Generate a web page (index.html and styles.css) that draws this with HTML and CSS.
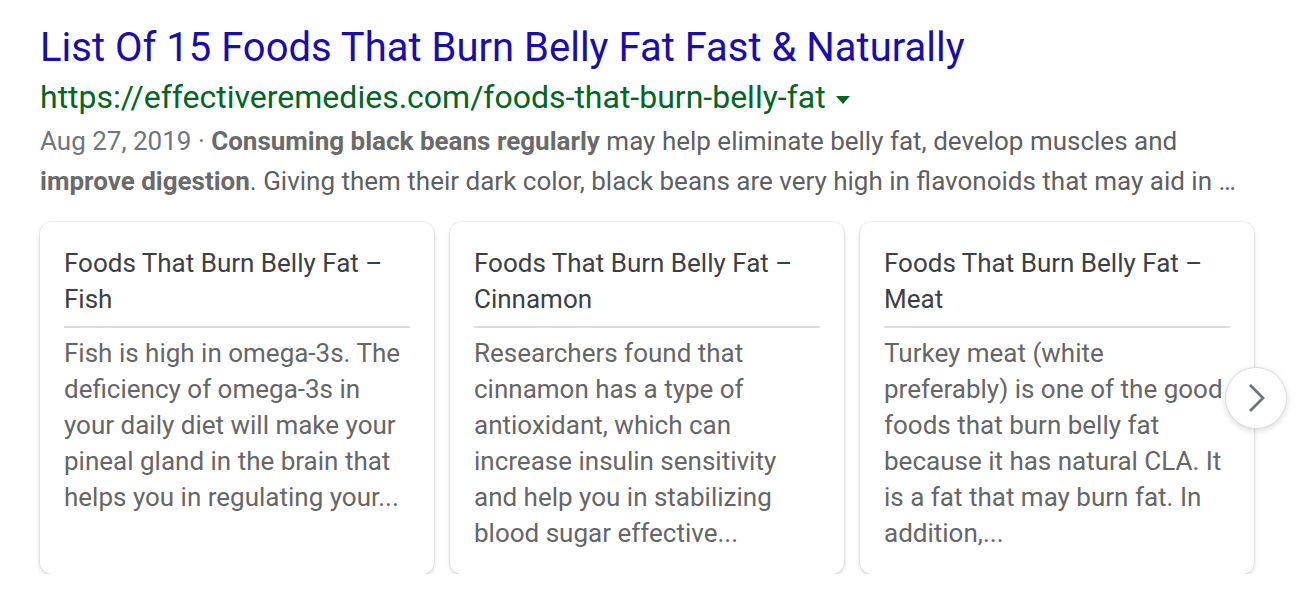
FILE: index.html
```html
<!DOCTYPE html>
<html>
<head>
<meta charset="utf-8">
<link rel="stylesheet" href="styles.css">
</head>
<body>
<div class="result">
  <a class="title" href="#">List Of 15 Foods That Burn Belly Fat Fast &amp; Naturally</a>
  <div class="url">https://effectiveremedies.com/foods-that-burn-belly-fat<span class="caret"></span></div>
  <div class="snippet"><span class="date">Aug 27, 2019 · </span><b>Consuming black beans regularly</b> may help eliminate belly fat, develop muscles and <b>improve digestion</b>. Giving them their dark color, black beans are very high in flavonoids that may aid in …</div>
  <div class="carousel">
    <div class="card">
      <div class="card-title">Foods That Burn Belly Fat – Fish</div>
      <div class="card-body">Fish is high in omega-3s. The deficiency of omega-3s in your daily diet will make your pineal gland in the brain that helps you in regulating your...</div>
    </div>
    <div class="card">
      <div class="card-title">Foods That Burn Belly Fat – Cinnamon</div>
      <div class="card-body">Researchers found that cinnamon has a type of antioxidant, which can increase insulin sensitivity and help you in stabilizing blood sugar effective...</div>
    </div>
    <div class="card">
      <div class="card-title">Foods That Burn Belly Fat – Meat</div>
      <div class="card-body">Turkey meat (white preferably) is one of the good foods that burn belly fat because it has natural CLA. It is a fat that may burn fat. In addition,...</div>
    </div>
    <div class="next">
      <svg width="20" height="30" viewBox="0 0 20 30"><path d="M3 2 L16 15 L3 28" fill="none" stroke="#70757a" stroke-width="2.8"/></svg>
    </div>
  </div>
</div>
</body>
</html>
```
FILE: styles.css
```css
html, body { margin: 0; padding: 0; background: #fff; }
body { font-family: Roboto, "Liberation Sans", Arial, sans-serif; }
.result { padding: 24px 0 0 40px; width: 1216px; }
.title { display: block; color: #1a0dab; font-size: 40px; line-height: 48px; text-decoration: none; white-space: nowrap; }
.url { color: #006621; font-size: 32px; line-height: 46px; white-space: nowrap; margin-top: 2px; }
.caret { display: inline-block; width: 0; height: 0; border-left: 7px solid transparent; border-right: 7px solid transparent; border-top: 8px solid #006621; vertical-align: middle; margin-left: 10px; }
.snippet { color: #5f5f5f; font-size: 26px; line-height: 40px; margin-top: 1px; }
.snippet .date { color: #70757a; }
.snippet b { color: #6a6a6a; font-weight: 700; }
.carousel { position: relative; display: flex; gap: 16px; margin-top: 21px; }
.card { flex: 0 0 394px; box-sizing: border-box; border-radius: 12px; background: #fff; box-shadow: 0 2px 5px rgba(0,0,0,0.16), 0 0 0 1px rgba(0,0,0,0.04); padding: 23px 24px 23px 24px; height: 352px; }
.card-title { color: #3c4043; font-size: 26px; line-height: 36px; padding-bottom: 9px; border-bottom: 2px solid #dadce0; }
.card-body { color: #666; font-size: 26px; line-height: 36px; margin-top: 7px; }
.next { position: absolute; left: 1185px; top: 145px; width: 62px; height: 62px; box-sizing: border-box; border-radius: 50%; background: #fff; border: 1px solid #dadce0; box-shadow: 0 2px 6px rgba(0,0,0,0.15); display: flex; align-items: center; justify-content: center; padding-left: 2px; }
```
